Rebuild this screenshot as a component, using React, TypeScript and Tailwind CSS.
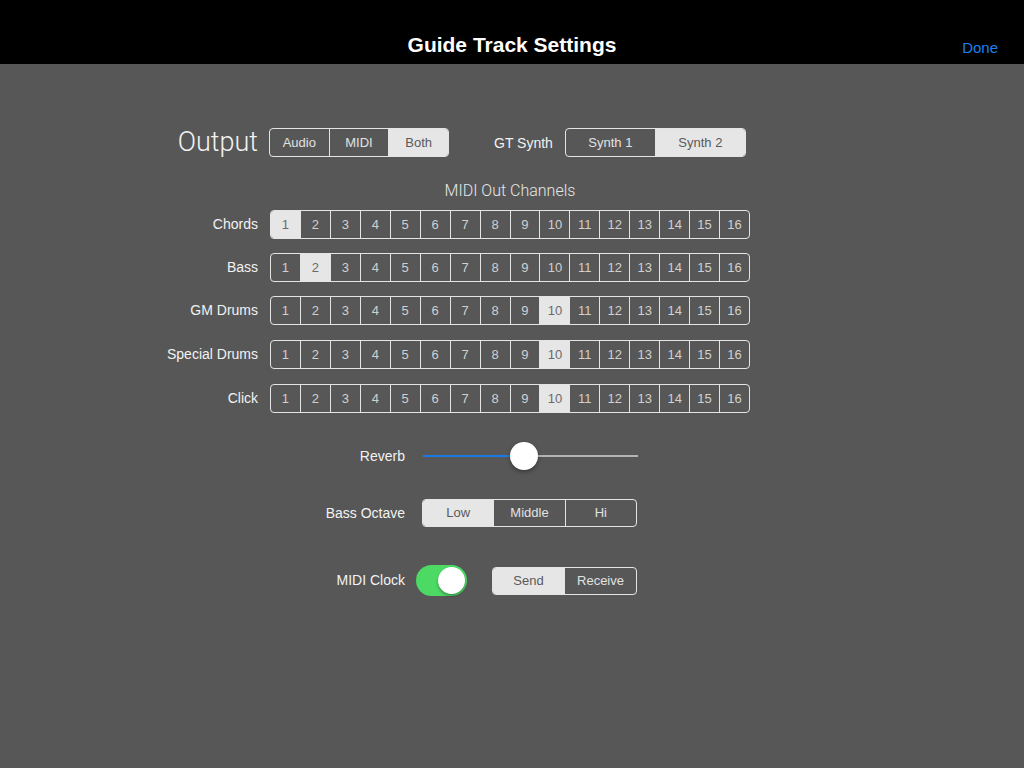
import React, { useState } from 'react';

const sans = { fontFamily: '"Liberation Sans", Arial, sans-serif' };

interface SegmentProps {
  options: string[];
  selected: number;
  size: string;
  onSelect?: (i: number) => void;
}

// iOS 7 style segmented control, light fill marks the chosen segment
const Segmented = ({ options, selected, size, onSelect }: SegmentProps) => (
  <div className={`flex ${size} border border-[#e4e4e4] rounded-[4px] overflow-hidden`}>
    {options.map((o, i) => (
      <button
        key={o}
        onClick={() => onSelect && onSelect(i)}
        className={`flex-1 flex items-center justify-center text-[13px] ${
          i > 0 ? 'border-l border-[#e4e4e4]' : ''
        } ${i === selected ? 'bg-[#e6e6e6] text-[#5a5a5a]' : 'text-[#e2e2e2]'}`}
      >
        {o}
      </button>
    ))}
  </div>
);

const channels = Array.from({ length: 16 }, (_, i) => i + 1);

const ChannelRow = ({ label, value, onSelect, top }: { label: string; value: number; onSelect: (n: number) => void; top: string }) => (
  <div className={`flex items-center h-[29px] ${top}`}>
    <div className="w-[108px] text-right text-[14px] text-[#f2f2f2]">{label}</div>
    <div className="ml-[12px] flex w-[480px] h-[29px] border border-[#e4e4e4] rounded-[4px] overflow-hidden">
      {channels.map((n) => (
        <button
          key={n}
          onClick={() => onSelect(n)}
          className={`flex-1 flex items-center justify-center text-[13px] ${
            n > 1 ? 'border-l border-[#e4e4e4]' : ''
          } ${n === value ? 'bg-[#e6e6e6] text-[#6a6a6a]' : 'text-[#d0d0d0]'}`}
        >
          {n}
        </button>
      ))}
    </div>
  </div>
);

export default function App() {
  const [output, setOutput] = useState(2);
  const [synth, setSynth] = useState(1);
  const [chan, setChan] = useState({ chords: 1, bass: 2, gm: 10, special: 10, click: 10 });
  const [octave, setOctave] = useState(0);
  const [clockOn, setClockOn] = useState(true);
  const [clockMode, setClockMode] = useState(0);
  const reverb = 101;

  const rows: { key: keyof typeof chan; label: string; top: string }[] = [
    { key: 'chords', label: 'Chords', top: 'mt-[9px]' },
    { key: 'bass', label: 'Bass', top: 'mt-[14px]' },
    { key: 'gm', label: 'GM Drums', top: 'mt-[14px]' },
    { key: 'special', label: 'Special Drums', top: 'mt-[15px]' },
    { key: 'click', label: 'Click', top: 'mt-[15px]' },
  ];

  return (
    <div className="w-[1024px] h-[768px] flex flex-col bg-[#575757]" style={sans}>
      {/* nav bar */}
      <div className="h-16 bg-black grid grid-cols-[1fr_auto_1fr] items-end pb-[7px]">
        <div />
        <div className="text-[21px] font-bold text-white leading-[24px]">Guide Track Settings</div>
        <div className="flex justify-end pr-[26px]">
          <button className="text-[15px] text-[#1a80f0] leading-[18px]">Done</button>
        </div>
      </div>

      <div className="flex flex-col pl-[150px]">
        {/* output + synth */}
        <div className="flex items-center h-[29px] mt-[64px]">
          <div
            className="w-[108px] text-right text-[27px] font-light text-[#f2f2f2] leading-none"
            style={{ fontFamily: 'Roboto, "Liberation Sans", sans-serif' }}
          >
            Output
          </div>
          <div className="ml-[11px]">
            <Segmented options={['Audio', 'MIDI', 'Both']} selected={output} onSelect={setOutput} size="w-[180px] h-[29px]" />
          </div>
          <div className="ml-[45px] text-[14px] text-[#f2f2f2] pt-[2px]">GT Synth</div>
          <div className="ml-[12px]">
            <Segmented options={['Synth 1', 'Synth 2']} selected={synth} onSelect={setSynth} size="w-[181px] h-[29px]" />
          </div>
        </div>

        <div
          className="ml-[120px] w-[480px] mt-[24px] text-center text-[16px] font-light text-[#e6e6e6] leading-[20px]"
          style={{ fontFamily: 'Roboto, "Liberation Sans", sans-serif' }}
        >
          MIDI Out Channels
        </div>

        {rows.map((r) => (
          <ChannelRow
            key={r.key}
            label={r.label}
            top={r.top}
            value={chan[r.key]}
            onSelect={(n) => setChan({ ...chan, [r.key]: n })}
          />
        ))}

        {/* reverb */}
        <div className="flex items-center h-[28px] mt-[29px]">
          <div className="w-[255px] text-right text-[14px] text-[#f2f2f2]">Reverb</div>
          <div className="ml-[18px] relative w-[215px] h-[28px] flex items-center">
            <div className="h-[2px] bg-[#1a7ae8]" style={{ width: reverb }} />
            <div className="h-[2px] flex-1 bg-[#b4b4b4]" />
            <div
              className="absolute top-0 w-[28px] h-[28px] rounded-full bg-white shadow-[0_2px_4px_rgba(0,0,0,0.35)]"
              style={{ left: reverb - 14 }}
            />
          </div>
        </div>

        {/* bass octave */}
        <div className="flex items-center h-[28px] mt-[29px]">
          <div className="w-[255px] text-right text-[14px] text-[#f2f2f2]">Bass Octave</div>
          <div className="ml-[17px]">
            <Segmented options={['Low', 'Middle', 'Hi']} selected={octave} onSelect={setOctave} size="w-[215px] h-[28px]" />
          </div>
        </div>

        {/* midi clock */}
        <div className="flex items-center h-[31px] mt-[38px]">
          <div className="w-[255px] text-right text-[14px] text-[#f2f2f2]">MIDI Clock</div>
          <button
            onClick={() => setClockOn(!clockOn)}
            className={`ml-[11px] w-[51px] h-[31px] rounded-full flex items-center p-[2px] ${
              clockOn ? 'bg-[#4cd964] justify-end' : 'bg-[#777] justify-start'
            }`}
          >
            <div className="w-[27px] h-[27px] rounded-full bg-white shadow-[0_2px_3px_rgba(0,0,0,0.3)]" />
          </button>
          <div className="ml-[25px]">
            <Segmented options={['Send', 'Receive']} selected={clockMode} onSelect={setClockMode} size="w-[145px] h-[28px]" />
          </div>
        </div>
      </div>
    </div>
  );
}
